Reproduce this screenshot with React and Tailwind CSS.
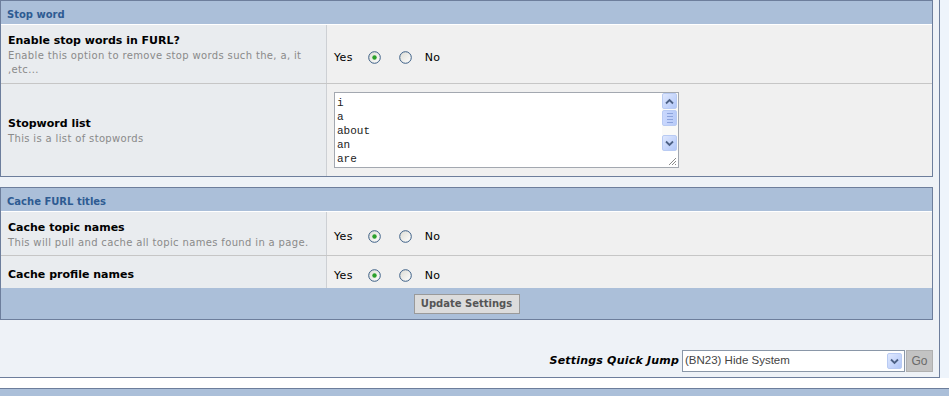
import React from "react";

function Radio({ checked }) {
  return (
    <svg width="13" height="13" viewBox="0 0 13 13" className="block">
      <defs>
        <linearGradient id={checked ? "rg1" : "rg2"} x1="0" y1="0" x2="1" y2="1">
          <stop offset="0" stopColor="#dcdcd4" />
          <stop offset="1" stopColor="#ffffff" />
        </linearGradient>
      </defs>
      <circle cx="6.5" cy="6.5" r="5.8" fill={`url(#${checked ? "rg1" : "rg2"})`} stroke="#3c5f86" strokeWidth="1" />
      {checked && <circle cx="6.5" cy="6.5" r="2.2" fill="#2aa02a" />}
    </svg>
  );
}

function YesNo() {
  return (
    <div className="flex items-center pl-[7px] pt-[6px] text-[11px] text-black">
      <span className="mt-[2px] tracking-[0.3px]">Yes</span>
      <span className="ml-[15px]"><Radio checked /></span>
      <span className="ml-[18px]"><Radio /></span>
      <span className="ml-[13px] mt-[2px] tracking-[0.3px]">No</span>
    </div>
  );
}

function Header({ children }) {
  return (
    <div className="h-[24px] bg-[#abbfd9] border-b border-white pl-[6px] pt-[3px] flex items-center text-[10px] font-bold text-[#2e5b92]">
      {children}
    </div>
  );
}

function Row({ title, desc, height, children, last }) {
  return (
    <div className={`flex ${last ? "" : "border-b border-[#c6c6c6]"}`} style={{ height }}>
      <div
        className={`w-[326px] border-r border-[#cdd0d4] bg-[#e9ecef] pl-[7px] pr-[10px] ${
          desc ? "pt-[2px]" : "pt-[6px]"
        } flex flex-col justify-center`}
      >
        <div className="text-[11px] font-bold text-black leading-[16px]">{title}</div>
        {desc && <div className="text-[10px] text-[#8a8a8a] leading-[14px] tracking-[0.35px]">{desc}</div>}
      </div>
      <div className="flex-1 bg-[#f0f0f0] flex items-center">{children}</div>
    </div>
  );
}

function ScrollBtn({ dir }) {
  return (
    <div className="w-[15px] h-[16px] rounded-[2px] border border-[#b9cbf3] bg-gradient-to-br from-[#dfe8fe] to-[#b2c7f8] flex items-center justify-center">
      <svg width="9" height="7" viewBox="0 0 9 7">
        <path d={dir === "up" ? "M1 5.5 L4.5 2 L8 5.5" : "M1 1.5 L4.5 5 L8 1.5"} fill="none" stroke="#4d6185" strokeWidth="1.8" />
      </svg>
    </div>
  );
}

function Textarea() {
  const words = ["i", "a", "about", "an", "are"];
  return (
    <div className="relative ml-[7px] w-[345px] h-[76px] border border-[#a3a8b0] bg-white overflow-hidden">
      <div className="pl-[2px] pt-[3px] font-['Liberation_Mono'] text-[11px] leading-[14px] text-[#222]">
        {words.map((w) => (
          <div key={w}>{w}</div>
        ))}
      </div>
      <div className="absolute right-0 top-0 w-[16px] h-[58px] bg-[#fafaf8] flex flex-col">
        <ScrollBtn dir="up" />
        <div className="mt-[1px] w-[15px] h-[16px] rounded-[2px] border border-[#b9cbf3] bg-gradient-to-r from-[#cad8fd] to-[#b8cbf8] flex flex-col items-center justify-center gap-[2px]">
          <div className="w-[6px] h-[1px] bg-[#8ca3dc]" />
          <div className="w-[6px] h-[1px] bg-[#8ca3dc]" />
          <div className="w-[6px] h-[1px] bg-[#8ca3dc]" />
          <div className="w-[6px] h-[1px] bg-[#8ca3dc]" />
        </div>
        <div className="flex-1" />
        <ScrollBtn dir="down" />
      </div>
      <svg className="absolute right-[1px] bottom-[1px]" width="10" height="10" viewBox="0 0 10 10">
        <path d="M9 2 L2 9 M9 5 L5 9 M9 8 L8 9" stroke="#8a8a8a" strokeWidth="1" />
      </svg>
    </div>
  );
}

export default function App() {
  return (
    <div className="w-[949px] h-[396px] overflow-hidden bg-[#eef4fb] font-['DejaVu_Sans',sans-serif]">
      <div className="w-[940px] border-r border-b border-[#6d7e9c] bg-[#eef2f7] pr-[6px] pb-[5px]">
        {/* Table 1 */}
        <div className="border border-[#6d7e9c]">
          <Header>Stop word</Header>
          <Row
            height="59px"
            title="Enable stop words in FURL?"
            desc="Enable this option to remove stop words such the, a, it ,etc..."
          >
            <YesNo />
          </Row>
          <Row height="92px" title="Stopword list" desc="This is a list of stopwords" last>
            <Textarea />
          </Row>
        </div>

        {/* Table 2 */}
        <div className="mt-[10px] border border-[#6d7e9c]">
          <Header>Cache FURL titles</Header>
          <Row
            height="44px"
            title="Cache topic names"
            desc="This will pull and cache all topic names found in a page."
          >
            <YesNo />
          </Row>
          <Row height="32px" title="Cache profile names" last>
            <YesNo />
          </Row>
          <div className="h-[31px] bg-[#abbfd9] flex items-center justify-center">
            <div className="h-[20px] w-[106px] border border-[#9a9a9a] bg-[#dcdcdc] flex items-center justify-center text-[10px] font-bold text-[#555]">
              Update Settings
            </div>
          </div>
        </div>

        {/* Quick jump */}
        <div className="mt-[30px] flex items-center justify-end h-[22px]">
          <span className="text-[11px] font-bold italic text-black mr-[3px] tracking-[0.2px]">Settings Quick Jump</span>
          <div className="w-[223px] h-[22px] border border-[#8a97a8] bg-white flex items-center justify-between pl-[2px] pr-[2px]">
            <span className="font-['Liberation_Sans'] text-[11.5px] text-[#444]">(BN23) Hide System</span>
            <div className="w-[15px] h-[16px] rounded-[2px] border border-[#b9cbf3] bg-gradient-to-br from-[#dfe8fe] to-[#b2c7f8] flex items-center justify-center">
              <svg width="9" height="7" viewBox="0 0 9 7">
                <path d="M1 1.5 L4.5 5 L8 1.5" fill="none" stroke="#4d6185" strokeWidth="1.8" />
              </svg>
            </div>
          </div>
          <div className="ml-[1px] w-[27px] h-[22px] bg-[#c3c3c3] border border-[#b0b0b0] flex items-center justify-center font-['Liberation_Sans'] text-[12px] text-[#6a6a6a]">
            Go
          </div>
        </div>
      </div>
      <div className="h-[10px] bg-white" />
      <div className="h-[20px] border-t border-[#6d7e9c] bg-[#abbfd9]" />
    </div>
  );
}
